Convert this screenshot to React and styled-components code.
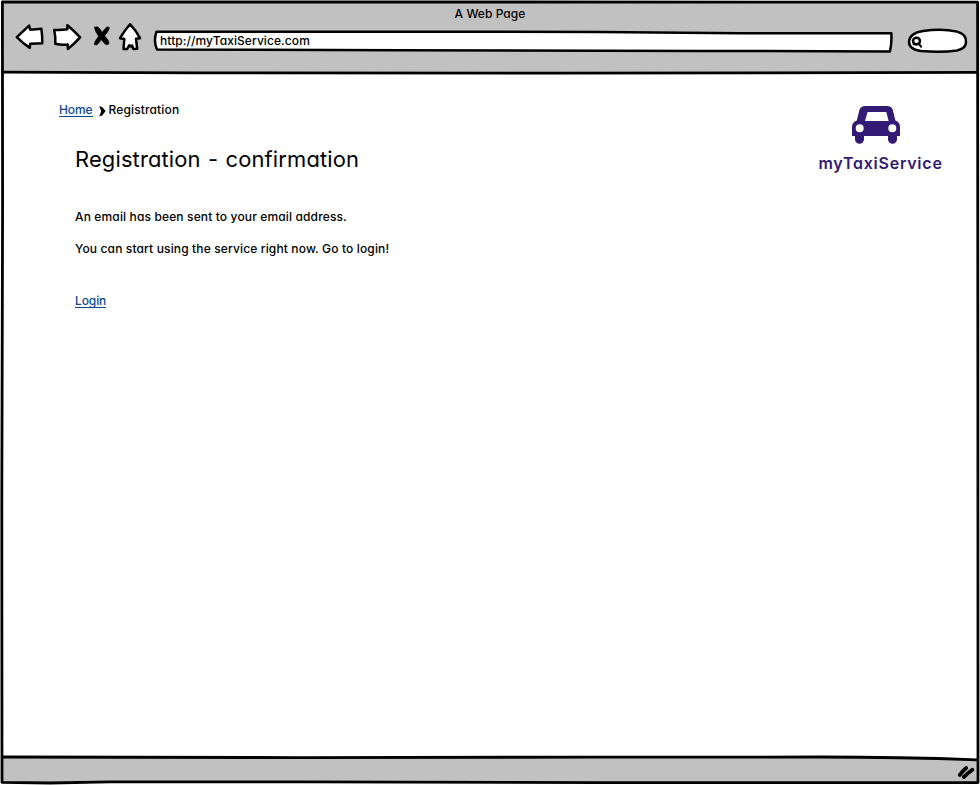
import React from "react";
import styled, { createGlobalStyle } from "styled-components";

const GlobalStyle = createGlobalStyle`
  * { box-sizing: border-box; }
  body {
    margin: 0;
    background: #fff;
    color: #000;
    font: 450 12px/16px Inter, "Liberation Sans", sans-serif;
    font-feature-settings: "cv11";
    letter-spacing: 0.14px;
  }
  h1, p { margin: 0; }
  svg { display: block; overflow: visible; flex: none; }
`;

const BrowserWindow = styled.div`
  position: relative;
  display: flex;
  flex-direction: column;
  width: 980px;
  height: 785px;
  padding: 2px;
  overflow: hidden;
`;

const FrameLines = styled.svg`
  position: absolute;
  inset: 0;
  pointer-events: none;
  fill: none;
  stroke: #000;
  stroke-width: 2.8;
  stroke-linejoin: round;
  stroke-linecap: round;
`;

const Chrome = styled.header`
  height: 71px;
  background: #c1c1c1;
`;

const TitleBar = styled.div`
  height: 18px;
  padding: 4px 0 0 0;
  text-align: center;
  letter-spacing: 0.05px;
`;

const Toolbar = styled.div`
  display: flex;
  align-items: flex-start;
  height: 36px;
  padding-left: 13px;
`;

const ToolIcon = styled.svg`
  width: ${(p) => p.$w}px;
  height: 32px;
  margin-right: ${(p) => p.$gap}px;
  fill: #fff;
  stroke: #000;
  stroke-width: 2.5;
  stroke-linejoin: round;
  stroke-linecap: round;
`;

const Field = styled.div`
  position: relative;
  width: ${(p) => p.$w}px;
  height: 32px;
  margin-right: ${(p) => p.$gap || 0}px;
`;

const FieldShape = styled.svg`
  position: absolute;
  inset: 0;
  fill: #fff;
  stroke: #000;
  stroke-width: 2.5;
  stroke-linejoin: round;
  stroke-linecap: round;
`;

const Address = styled.div`
  position: relative;
  padding: 13px 0 0 7px;
  letter-spacing: 0.08px;
`;

const Page = styled.main`
  flex: 1;
  display: flex;
  justify-content: space-between;
  padding: 29px 35px 0 57px;
`;

const Content = styled.div``;

const Breadcrumb = styled.nav`
  display: flex;
  align-items: flex-start;
  height: 17px;
`;

const Link = styled.a`
  display: inline-block;
  height: 15px;
  border-bottom: 1px solid #0b4a8f;
  color: #0b4a8f;
  letter-spacing: -0.1px;
  text-decoration: none;
  cursor: pointer;
`;

const Chevron = styled.svg`
  width: 7px;
  height: 11px;
  margin: 4px 3px 0 6px;
`;

const Article = styled.section`
  padding: 25px 0 0 16px;
`;

const Heading = styled.h1`
  margin-bottom: 35px;
  font-size: 21.9px;
  line-height: 30px;
  font-weight: 400;
  letter-spacing: 0.16px;
  word-spacing: 1px;
`;

const Message = styled.p`
  margin-bottom: ${(p) => p.$gap}px;
`;

const Brand = styled.div`
  display: flex;
  flex-direction: column;
  align-items: center;
  width: 125px;
  padding-top: 4px;
  color: #331a75;
`;

const Car = styled.svg`
  width: 48px;
  height: 38px;
  margin-right: 10px;
`;

const BrandName = styled.div`
  margin-top: 9px;
  font-size: 16px;
  line-height: 20px;
  font-weight: 600;
  letter-spacing: 0.75px;
  white-space: nowrap;
`;

const StatusBar = styled.footer`
  position: relative;
  height: 26px;
  background: #c1c1c1;
`;

const StatusEdge = styled.svg`
  position: absolute;
  inset: 0;
`;

export default function App() {
  return (
    <>
      <GlobalStyle />
      <BrowserWindow>
        <Chrome>
          <TitleBar>A Web Page</TitleBar>
          <Toolbar>
            <ToolIcon $w={30} $gap={7} viewBox="15 20 30 32">
              <path d="M16.8 37.2L29.1 25.7L30.2 29.7Q36 29.4 41.4 28.8Q42.4 36 42.3 43.2Q36 43.2 30.2 43.7L29.8 47.9Q22.6 43.2 16.8 37.2Z" />
            </ToolIcon>
            <ToolIcon $w={30} $gap={11} viewBox="52 20 30 32">
              <path d="M54.2 30Q61 30.4 67.4 29.3L67.4 25.3Q74 30.8 80.1 37.3Q74.4 43.6 67.9 49L67.7 44.5Q61.4 45.2 55.3 43.7Q55.7 36.6 54.2 30Z" />
            </ToolIcon>
            <ToolIcon $w={18} $gap={6} viewBox="93 20 18 32">
              <path
                d="M94.6 27.2Q97 26 98.6 27.6Q100.6 29.6 102.2 32.4Q104.2 29.2 107 26.8L109.4 27.4Q109.4 30 104.6 35.8Q109 41 109 42.6L108.2 44.6L105.8 44.6Q103 42.6 101.4 39.6Q99 43 97 44.9L94.5 44.8Q93.6 42.6 98.6 36.2Q94.4 30.6 94.6 27.2Z"
                fill="#000"
                strokeWidth="0.6"
              />
            </ToolIcon>
            <ToolIcon $w={24} $gap={12} viewBox="117 20 24 32">
              <path d="M130 24.2Q136 30.5 140 38.2L136 38.8L137.2 48.8L133.4 49L132 45.6L130.9 46.4L129.2 45.4L127 49.1L123.5 49L124.3 39L120 38.2Q124.5 30.5 130 24.2Z" />
            </ToolIcon>
            <Field $w={740} $gap={14}>
              <FieldShape width="740" height="32" viewBox="153 20 740 32">
                <path d="M156.5 31.7L600 31.9L740 33.2L891.3 33.3Q892 43 889.9 51.5L700 50.9L400 50.2L157 49.6Q153.2 41 156.5 31.7Z" />
              </FieldShape>
              <Address>http://myTaxiService.com</Address>
            </Field>
            <Field $w={60}>
              <FieldShape width="60" height="32" viewBox="907 20 60 32">
                <path d="M923 31Q942 28.2 957 31.6Q966.4 34 966 42Q966.4 48.2 957 50.5Q941 52.8 921 51Q909 49.6 909 41.5Q909.8 33 923 31Z" />
                <ellipse cx="916.5" cy="41" rx="3.5" ry="3.2" />
                <path d="M918.7 43.6L921 46.6M913.7 44.2L919 44.1" strokeWidth="2.2" />
              </FieldShape>
            </Field>
          </Toolbar>
        </Chrome>

        <Page>
          <Content>
            <Breadcrumb>
              <Link>Home</Link>
              <Chevron viewBox="0 0 7 11">
                <path d="M.2 .1L3.4 1.2L6.6 5.1L3.2 9.5L.3 10.4L2.2 5.3Z" fill="#000" />
              </Chevron>
              <span>Registration</span>
            </Breadcrumb>
            <Article>
              <Heading>Registration - confirmation</Heading>
              <Message $gap={16}>An email has been sent to your email address.</Message>
              <Message $gap={36}>You can start using the service right now. Go to login!</Message>
              <Link>Login</Link>
            </Article>
          </Content>
          <Brand>
            <Car viewBox="0 0 48 38">
              <path
                fill="currentColor"
                fillRule="evenodd"
                d="M13.5 0H35Q39.6 0 40.8 4L43.4 14.4Q48 16 48 21V30H45V33.2A4.5 4.5 0 0 1 36 33.2V30H12V33.2A4.5 4.5 0 0 1 3 33.2V30H0V21Q0 16 4.8 14.4L7.4 4Q8.8 0 13.5 0ZM15.6 6L13 15H36.7L34.3 6ZM7.7 18.3A4 4 0 1 0 7.7 26.3A4 4 0 1 0 7.7 18.3ZM40.3 18.3A4 4 0 1 0 40.3 26.3A4 4 0 1 0 40.3 18.3Z"
              />
            </Car>
            <BrandName>myTaxiService</BrandName>
          </Brand>
        </Page>

        <StatusBar>
          <StatusEdge width="976" height="26" viewBox="2 757 976 26">
            <path d="M2 756L978 756L978 759.8Q900 757 820 757L2 757.2Z" fill="#fff" />
            <path
              d="M959.8 775Q962.5 771 966.2 768M963.8 777Q968 773 972.4 769.8"
              fill="none"
              stroke="#000"
              strokeWidth="3.8"
              strokeLinecap="round"
            />
          </StatusEdge>
        </StatusBar>

        <FrameLines width="980" height="785" viewBox="0 0 980 785">
          <path d="M2.4 2L500 2L977.6 2.2L977.9 400L978 782.5L600 782.6L300 781.9L110 781.9L50 783L2 782.3L1.8 500L2.6 200Z" />
          <path d="M3 72.2L200 72.9L560 73.1L760 72.9L977 72.3" />
          <path d="M3 757L300 757.6L600 757.1L820 757Q900 757 977 759.8" />
        </FrameLines>
      </BrowserWindow>
    </>
  );
}
